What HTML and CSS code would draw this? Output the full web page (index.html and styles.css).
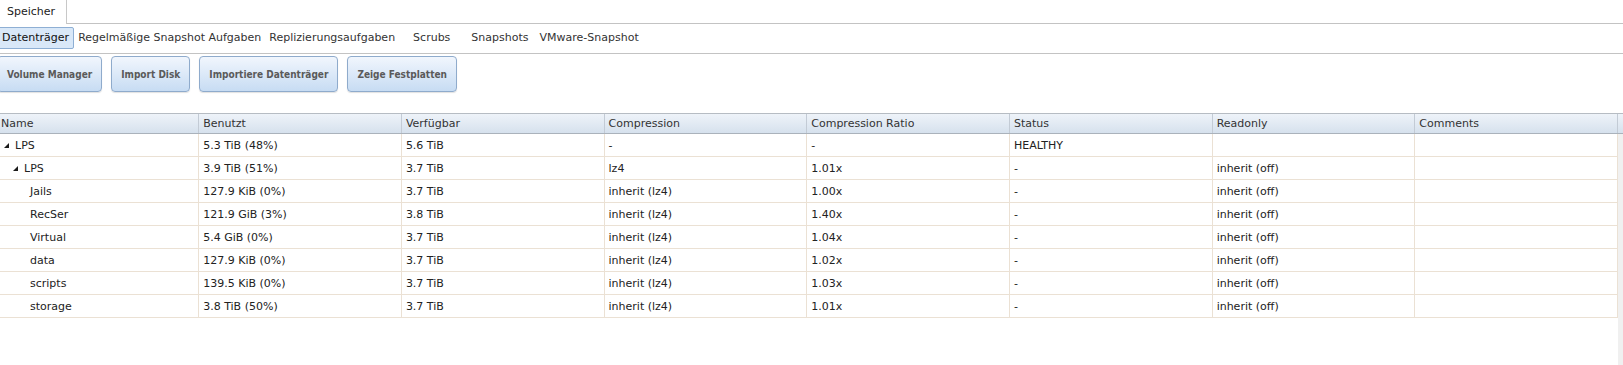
FILE: index.html
```html
<!DOCTYPE html>
<html lang="de">
<head>
  <meta charset="UTF-8">
  <title>Speicher</title>
  <link rel="stylesheet" href="styles.css">
</head>
<body>
<div class="app">

  <div class="tabbar">
    <div class="tab active">Speicher</div>
  </div>

  <div class="subtabs">
    <span class="subtab active">Datenträger</span>
    <span class="subtab">Regelmäßige Snapshot Aufgaben</span>
    <span class="subtab">Replizierungsaufgaben</span>
    <span class="subtab scrubs">Scrubs</span>
    <span class="subtab snaps">Snapshots</span>
    <span class="subtab">VMware-Snapshot</span>
  </div>

  <div class="toolbar">
    <button class="btn">Volume Manager</button>
    <button class="btn">Import Disk</button>
    <button class="btn">Importiere Datenträger</button>
    <button class="btn">Zeige Festplatten</button>
  </div>

  <div class="grid">
    <div class="grid-head">
      <table>
        <tr>
          <th>Name</th>
          <th>Benutzt</th>
          <th>Verfügbar</th>
          <th>Compression</th>
          <th>Compression Ratio</th>
          <th>Status</th>
          <th>Readonly</th>
          <th>Comments</th>
        </tr>
      </table>
    </div>
    <div class="grid-body">
      <table>
        <tr>
          <td><span class="exp"><i></i></span>LPS</td>
          <td>5.3 TiB (48%)</td>
          <td>5.6 TiB</td>
          <td>-</td>
          <td>-</td>
          <td>HEALTHY</td>
          <td></td>
          <td></td>
        </tr>
        <tr>
          <td class="lvl1"><span class="exp"><i></i></span>LPS</td>
          <td>3.9 TiB (51%)</td>
          <td>3.7 TiB</td>
          <td>lz4</td>
          <td>1.01x</td>
          <td>-</td>
          <td>inherit (off)</td>
          <td></td>
        </tr>
        <tr>
          <td class="lvl2">Jails</td>
          <td>127.9 KiB (0%)</td>
          <td>3.7 TiB</td>
          <td>inherit (lz4)</td>
          <td>1.00x</td>
          <td>-</td>
          <td>inherit (off)</td>
          <td></td>
        </tr>
        <tr>
          <td class="lvl2">RecSer</td>
          <td>121.9 GiB (3%)</td>
          <td>3.8 TiB</td>
          <td>inherit (lz4)</td>
          <td>1.40x</td>
          <td>-</td>
          <td>inherit (off)</td>
          <td></td>
        </tr>
        <tr>
          <td class="lvl2">Virtual</td>
          <td>5.4 GiB (0%)</td>
          <td>3.7 TiB</td>
          <td>inherit (lz4)</td>
          <td>1.04x</td>
          <td>-</td>
          <td>inherit (off)</td>
          <td></td>
        </tr>
        <tr>
          <td class="lvl2">data</td>
          <td>127.9 KiB (0%)</td>
          <td>3.7 TiB</td>
          <td>inherit (lz4)</td>
          <td>1.02x</td>
          <td>-</td>
          <td>inherit (off)</td>
          <td></td>
        </tr>
        <tr>
          <td class="lvl2">scripts</td>
          <td>139.5 KiB (0%)</td>
          <td>3.7 TiB</td>
          <td>inherit (lz4)</td>
          <td>1.03x</td>
          <td>-</td>
          <td>inherit (off)</td>
          <td></td>
        </tr>
        <tr>
          <td class="lvl2">storage</td>
          <td>3.8 TiB (50%)</td>
          <td>3.7 TiB</td>
          <td>inherit (lz4)</td>
          <td>1.01x</td>
          <td>-</td>
          <td>inherit (off)</td>
          <td></td>
        </tr>
      </table>
      <div class="gutter"></div>
    </div>
  </div>

</div>
</body>
</html>
```

FILE: styles.css
```css
html, body {
  margin: 0;
  overflow: hidden;
  background: #ffffff;
}
body {
  font-family: "DejaVu Sans", Verdana, sans-serif;
  font-size: 11px;
  color: #222;
}
.app {
  margin-left: -3px;
}

/* top tabs */
.tabbar {
  display: flex;
  height: 23px;
  border-bottom: 1px solid #c3c3c3;
}
.tab {
  height: 24px;
  line-height: 23px;
  padding: 0 11px 0 10px;
  margin-bottom: -1px;
  background: #fff;
  border-right: 1px solid #c8c8c8;
  color: #222;
}

/* sub tabs */
.subtabs {
  display: flex;
  align-items: flex-start;
  height: 26px;
  padding-top: 3px;
  border-bottom: 1px solid #c3c3c3;
}
.subtab {
  height: 20px;
  line-height: 20px;
  padding: 0 3px;
  border: 1px solid transparent;
  border-radius: 2px;
  color: #333;
  white-space: nowrap;
}
.subtab.active {
  background: #d9e8f8;
  border-color: #8eafd4;
  color: #111;
  padding: 0 4px;
}
.subtab.scrubs {
  padding: 0 10px 0 13px;
}
.subtab.snaps {
  padding: 0 6px 0 9px;
}

/* toolbar buttons */
.toolbar {
  display: flex;
  gap: 9px;
  padding-top: 2px;
}
.btn {
  height: 36px;
  padding: 0 9px;
  font-family: "DejaVu Sans Condensed", "DejaVu Sans", sans-serif;
  font-stretch: condensed;
  font-size: 10px;
  font-weight: bold;
  color: #5a5a5a;
  background: linear-gradient(#f1f6fd, #c7dcf3);
  border: 1px solid #8fabcc;
  border-radius: 4px;
  box-shadow: 0 1px 1px rgba(0,0,0,0.12);
  cursor: pointer;
}
.btn:hover {
  background: linear-gradient(#f7fafe, #d4e5f7);
}

/* data grid */
.grid {
  margin: 21px 0 0 -1px;
}
.grid table {
  width: 1622px;
  table-layout: fixed;
  border-collapse: collapse;
}
.grid-head {
  background: linear-gradient(#eef3f9, #d6e1ed);
  border-top: 1px solid #b6bcc3;
  border-bottom: 1px solid #aab2bb;
}
.grid-head th {
  height: 19px;
  padding: 0 4px;
  font-weight: normal;
  text-align: left;
  color: #333;
  border-right: 1px solid #c3cbd5;
  white-space: nowrap;
}
.grid-head th:first-child {
  padding-left: 5px;
}
.grid-body {
  display: flex;
  height: 240px;
}
.grid-body table {
  align-self: flex-start;
}
.grid-body td {
  height: 22px;
  padding: 0 4px;
  border-right: 1px solid #ebe1d4;
  border-bottom: 1px solid #ebe1d4;
  white-space: nowrap;
}
.grid-body td:first-child {
  padding-left: 5px;
}
.gutter {
  flex: 1;
  background: #f0f0f0;
}

/* tree expander */
.exp {
  display: inline-block;
  width: 14px;
}
.exp i {
  display: inline-block;
  width: 0;
  height: 0;
  margin-left: 3px;
  border-left: 5px solid transparent;
  border-bottom: 5px solid #1a1a1a;
  vertical-align: 1px;
}
.grid-body td.lvl1 {
  padding-left: 14px;
}
.grid-body td.lvl2 {
  padding-left: 34px;
}
```
